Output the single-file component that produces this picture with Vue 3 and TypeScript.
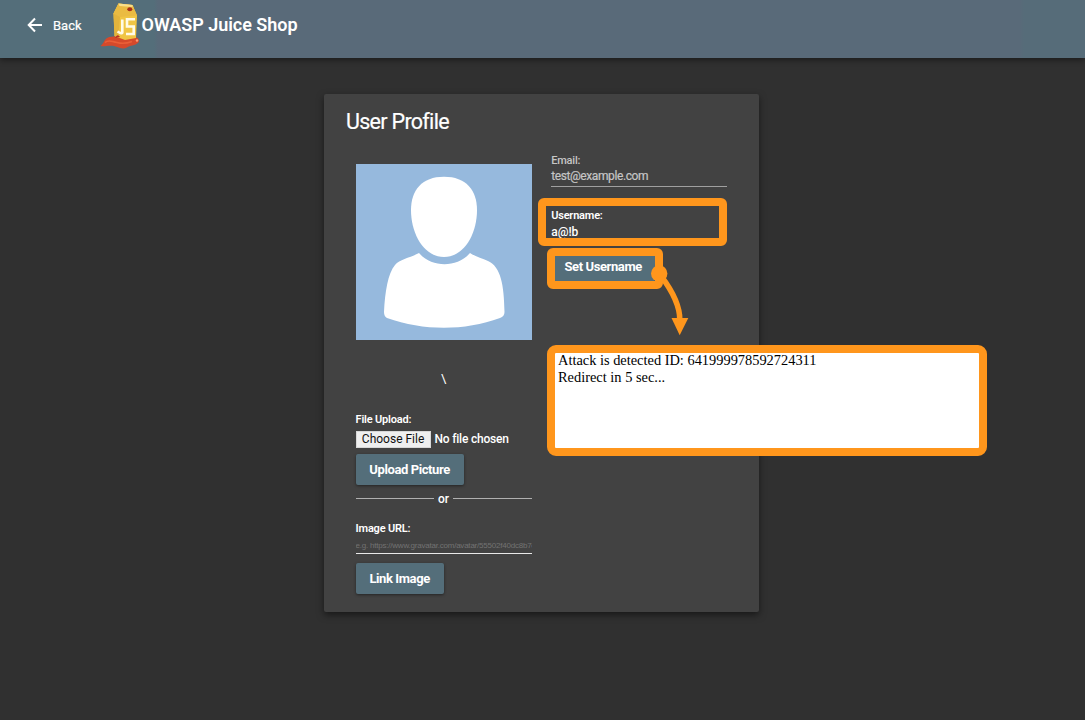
<script setup lang="ts">
import { ref } from 'vue'

const email = ref('test@example.com')
const username = ref('a@!b')
const attackId = '641999978592724311'
const placeholder = 'e.g. https://www.gravatar.com/avatar/55502f40dc8b7c'
</script>

<template>
  <div class="page">
    <header class="toolbar">
      <a class="back">
        <svg width="16" height="16" viewBox="0 0 16 16"><path d="M8 1.500 1.700 8 8 14.500M1.800 8H15" fill="none" stroke="#fff" stroke-width="2" /></svg>
        <span>Back</span>
      </a>
      <svg class="logo" viewBox="0 0 42 52">
        <path d="M2.500 46C6 43 6 40 9 38C12 36 15 37 18 36L36 37C40 37 42 40 40.500 42.500C37 46 32 45 29 47.500C25 50 20 47 16 46C11 45 6 47 2.500 46Z" fill="#d5492b" />
        <path d="M7 42.500C11 39 14 42 19 42.500C24 44 30 43 34 41.500" fill="none" stroke="#ea5f38" stroke-width="1.500" />
        <path d="M15.500 13.500 20.500 3.500 34.500 5 39 15.500 38 38 27 40 16.500 36Z" fill="#f0c544" />
        <path d="M15.500 13.500 20.500 3.500 22 17 20.500 38 16.500 36Z" fill="#e3b43c" />
        <path d="M15.500 13.500 20.500 3.500 34.500 5 39 15.500 22 17Z" fill="#eabb42" />
        <path d="M20.500 3.500 34.500 5 34.500 7 21.500 6Z" fill="#f9df8b" />
        <ellipse cx="31.800" cy="9.300" rx="2.500" ry="2" fill="#a92d18" />
        <path d="M24.300 19.500V32.500Q24 34.500 19.500 31.500M37 19.200H29V26.500H35.700V34H28" fill="none" stroke="#fffbe7" stroke-width="2.600" />
        <path d="M17 38Q19.500 33 22 37Z" fill="#b92f20" />
        <ellipse cx="39" cy="40.500" rx="1.200" ry="1.200" fill="#ff9a72" />
      </svg>
      <h1>OWASP Juice Shop</h1>
    </header>

    <main class="card">
      <h2>User Profile</h2>
      <div class="columns">
        <section class="left">
          <svg class="avatar" viewBox="0 0 176 176">
            <rect width="176" height="176" fill="#96b9dd" />
            <path d="M88 12.700C110 12.700 121 26 121 46C121 70 108 93 88 93C68 93 55 70 55 46C55 26 66 12.700 88 12.700Z" fill="#fff" />
            <path d="M63 89C76 104 101 104 114 89C120 93 126 94 132 97C145 103 148 121 148.500 148C148.500 151 147 153 144 154C108 167 68 167 31 154C29 153 28 151 28 148C29 128 32 109 39 101C44 95 54 94 63 89Z" fill="#fff" />
          </svg>
          <div class="caption">\</div>
          <label class="lbl upload-label">File Upload:</label>
          <div class="file"><button class="choose">Choose File</button><span>No file chosen</span></div>
          <button class="btn upload">Upload Picture</button>
          <div class="divider"><i></i><span>or</span><i></i></div>
          <label class="lbl url-label">Image URL:</label>
          <div class="url">{{ placeholder }}</div>
          <button class="btn link">Link Image</button>
        </section>
        <section class="right">
          <label class="lbl muted">Email:</label>
          <div class="value email">{{ email }}</div>
          <label class="lbl name-label">Username:</label>
          <div class="value name">{{ username }}</div>
          <button class="btn set">Set Username</button>
        </section>
      </div>
    </main>

    <div class="mark mark-name"></div>
    <div class="mark mark-set"></div>
    <div class="mark alert">
      <div>Attack is detected ID: {{ attackId }}</div>
      <div>Redirect in 5 sec...</div>
    </div>
    <svg class="arrow" width="50" height="80" viewBox="645 260 50 80">
      <circle cx="659.200" cy="273.500" r="8.200" fill="#ff961c" />
      <path d="M661 276Q680 301 679.800 320" fill="none" stroke="#ff961c" stroke-width="5.500" />
      <path d="M671.500 318H688.300L679.700 335.200Z" fill="#ff961c" />
    </svg>
  </div>
</template>

<style>
body { margin: 0; background: #303030; }
</style>

<style scoped>
* { box-sizing: border-box; }
.page { position: relative; width: 1085px; height: 720px; overflow: hidden; background: #303030; color: #fff; font-family: Roboto, "Liberation Sans", sans-serif; }
.toolbar { height: 58px; display: flex; align-items: flex-start; background: linear-gradient(90deg, #546e7a 0 154px, #596a79 158px 1020px, #566c79 1024px); box-shadow: 0 2px 6px rgba(0, 0, 0, .45); }
.back { flex: none; display: flex; width: 98px; padding: 17px 0 0 27px; font-size: 13px; line-height: 17px; font-weight: 400; }
.back span { margin-left: 10px; -webkit-text-stroke: .2px #fff; }
.logo { flex: none; width: 42px; height: 52px; }
h1 { margin: 13px 0 0 1.500px; font-size: 18px; line-height: 24px; font-weight: 600; letter-spacing: -.03px; white-space: nowrap; }
.card { width: 435px; height: 517.500px; margin: 36px 0 0 324.400px; padding: 15px 21.600px; border-radius: 2px; background: #424242; box-shadow: 0 3px 7px rgba(0, 0, 0, .5); }
h2 { margin: 0; font-size: 21.500px; line-height: 25px; font-weight: 400; letter-spacing: -.700px; white-space: nowrap; -webkit-text-stroke: .2px #fff; }
.columns { display: flex; gap: 19.600px; padding-left: 9.600px; }
.left, .right { width: 176px; flex: none; display: flex; flex-direction: column; align-items: flex-start; }
.left { padding-top: 30.400px; }
.right { padding-top: 20px; }
.avatar { display: block; width: 176px; height: 176px; }
.caption { width: 176px; margin-top: 30.600px; text-align: center; font-size: 13px; line-height: 16px; }
.lbl { font-size: 11px; line-height: 14px; font-weight: 600; letter-spacing: -.200px; }
.upload-label { margin-top: 26px; }
.file { display: flex; align-items: center; gap: 4px; height: 17px; margin-top: 4px; font-size: 12px; font-weight: 500; letter-spacing: -.220px; white-space: nowrap; }
.file span { line-height: 17px; padding-top: 1px; }
.choose { width: 75px; height: 17px; padding: 0; border: 1px solid #d8d8d8; background: #efefef; color: #111; font: 400 12px/13px Roboto, sans-serif; }
.btn { border: 0; border-radius: 2px; padding: 0; height: 31px; background: #546e7a; color: #fff; font: 700 13px/30px Roboto, sans-serif; letter-spacing: -.400px; box-shadow: 0 1px 3px rgba(0, 0, 0, .45); white-space: nowrap; }
.upload { width: 108px; margin-top: 6px; padding-top: 1px; }
.divider { display: flex; align-items: center; width: 176px; height: 14px; margin-top: 7px; font-size: 12px; line-height: 14px; font-weight: 500; }
.divider i { flex: 1; height: 1px; background: #b0b0b0; }
.divider span { padding: 0 4px; }
.url-label { margin-top: 16px; }
.url { width: 176px; height: 18px; border-bottom: 1px solid #e8e8e8; overflow: hidden; white-space: nowrap; font-size: 8px; line-height: 19px; color: #727272; font-family: "Liberation Sans", sans-serif; letter-spacing: -.220px; }
.link { width: 88px; margin-top: 9px; padding-top: 1px; }
.muted { color: #c6c6c6; font-weight: 500; }
.value { width: 176px; font-size: 12px; line-height: 16px; }
.email { height: 18px; margin-top: 1px; line-height: 15px; color: #c6c6c6; border-bottom: 1px solid #a0a0a0; letter-spacing: -.400px; -webkit-text-stroke: .2px #c6c6c6; }
.name-label { margin-top: 22px; }
.name { margin-top: 1px; font-weight: 500; }
.set { width: 104px; margin-top: 11px; }
.mark { position: absolute; border: 8px solid #ff961c; border-radius: 6px; }
.mark-name { left: 538px; top: 198px; width: 189px; height: 48px; }
.mark-set { left: 547px; top: 248px; width: 116px; height: 41px; background: linear-gradient(#546e7a, #546e7a) 0 0 / 0 0 no-repeat; }
.alert { left: 547px; top: 345px; width: 440px; height: 111px; border-radius: 9px; background: #fff; color: #000; padding: 0 3px; font: 14.400px/17px "Liberation Serif", serif; white-space: nowrap; }
.alert div { position: relative; top: -1px; }
.arrow { position: absolute; left: 645px; top: 260px; }
</style>
